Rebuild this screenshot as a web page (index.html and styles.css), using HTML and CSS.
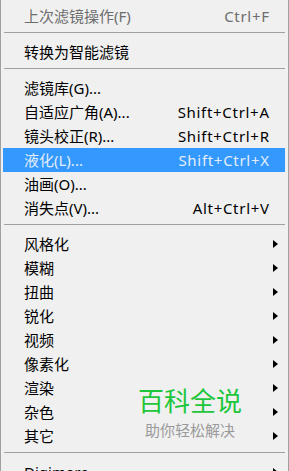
FILE: index.html
```html
<!DOCTYPE html>
<html lang="zh-CN">
<head>
    <meta charset="UTF-8">
    <meta name="viewport" content="width=device-width, initial-scale=1.0">
    <title>滤镜</title>
    <link rel="stylesheet" href="styles.css">
</head>
<body>

    <div class="menu">
        <div class="item disabled"><span>上次滤镜操作(F)</span><span class="key">Ctrl+F</span></div>
        <div class="sep"></div>
        <div class="item"><span>转换为智能滤镜</span></div>
        <div class="sep"></div>
        <div class="item"><span>滤镜库(G)...</span></div>
        <div class="item"><span>自适应广角(A)...</span><span class="key">Shift+Ctrl+A</span></div>
        <div class="item"><span>镜头校正(R)...</span><span class="key">Shift+Ctrl+R</span></div>
        <div class="item active"><span>液化(L)...</span><span class="key">Shift+Ctrl+X</span></div>
        <div class="item"><span>油画(O)...</span></div>
        <div class="item"><span>消失点(V)...</span><span class="key">Alt+Ctrl+V</span></div>
        <div class="sep"></div>
        <div class="item sub"><span>风格化</span><i class="arrow"></i></div>
        <div class="item sub"><span>模糊</span><i class="arrow"></i></div>
        <div class="item sub"><span>扭曲</span><i class="arrow"></i></div>
        <div class="item sub"><span>锐化</span><i class="arrow"></i></div>
        <div class="item sub"><span>视频</span><i class="arrow"></i></div>
        <div class="item sub"><span>像素化</span><i class="arrow"></i></div>
        <div class="item sub"><span>渲染</span><i class="arrow"></i></div>
        <div class="item sub"><span>杂色</span><i class="arrow"></i></div>
        <div class="item sub"><span>其它</span><i class="arrow"></i></div>
        <div class="sep"></div>
        <div class="item sub"><span>Digimarc</span><i class="arrow"></i></div>
    </div>

    <!-- 水印 -->
    <div class="watermark">
        <div class="wm-title">百科全说</div>
        <div class="wm-sub">助你轻松解决</div>
    </div>

</body>
</html>
```

FILE: styles.css
```css
html, body {
    margin: 0;
    padding: 0;
    height: 100%;
    overflow: hidden;
}
body {
    font-family: "Noto Sans", "Noto Sans CJK SC", sans-serif;
    font-size: 15px;
    background-color: #f0f0f0;
    color: #000;
    position: relative;
}
.menu {
    height: 100%;
    box-sizing: border-box;
    padding-top: 4px;
    border-left: 1px solid #a0a0a0;
    border-right: 1px solid #a0a0a0;
}
.item {
    display: flex;
    justify-content: space-between;
    align-items: center;
    height: 24px;
    margin: 0 3px 0 2px;
    padding: 0 16px 1px 21px;
    box-sizing: border-box;
    white-space: nowrap;
}
.item.sub {
    padding-right: 7px;
}
.item.disabled {
    color: #6d6d6d;
}
.item.active {
    background-color: #3399ff;
    color: #e3edf9;
}
.key {
    letter-spacing: 0.7px;
    margin-right: -0.7px;
}
.sep {
    height: 1px;
    background-color: #a0a0a0;
    margin: 4px 3px 7px 3px;
}
.arrow {
    width: 0;
    height: 0;
    border-top: 4px solid transparent;
    border-bottom: 4px solid transparent;
    border-left: 5px solid #000;
}
.watermark {
    position: absolute;
    left: 138px;
    top: 388px;
    text-align: center;
    line-height: 1;
}
.wm-title {
    font-size: 26px;
    color: #1ec63b;
}
.wm-sub {
    margin-top: 9px;
    font-size: 15px;
    color: #9a9a9a;
}
```
